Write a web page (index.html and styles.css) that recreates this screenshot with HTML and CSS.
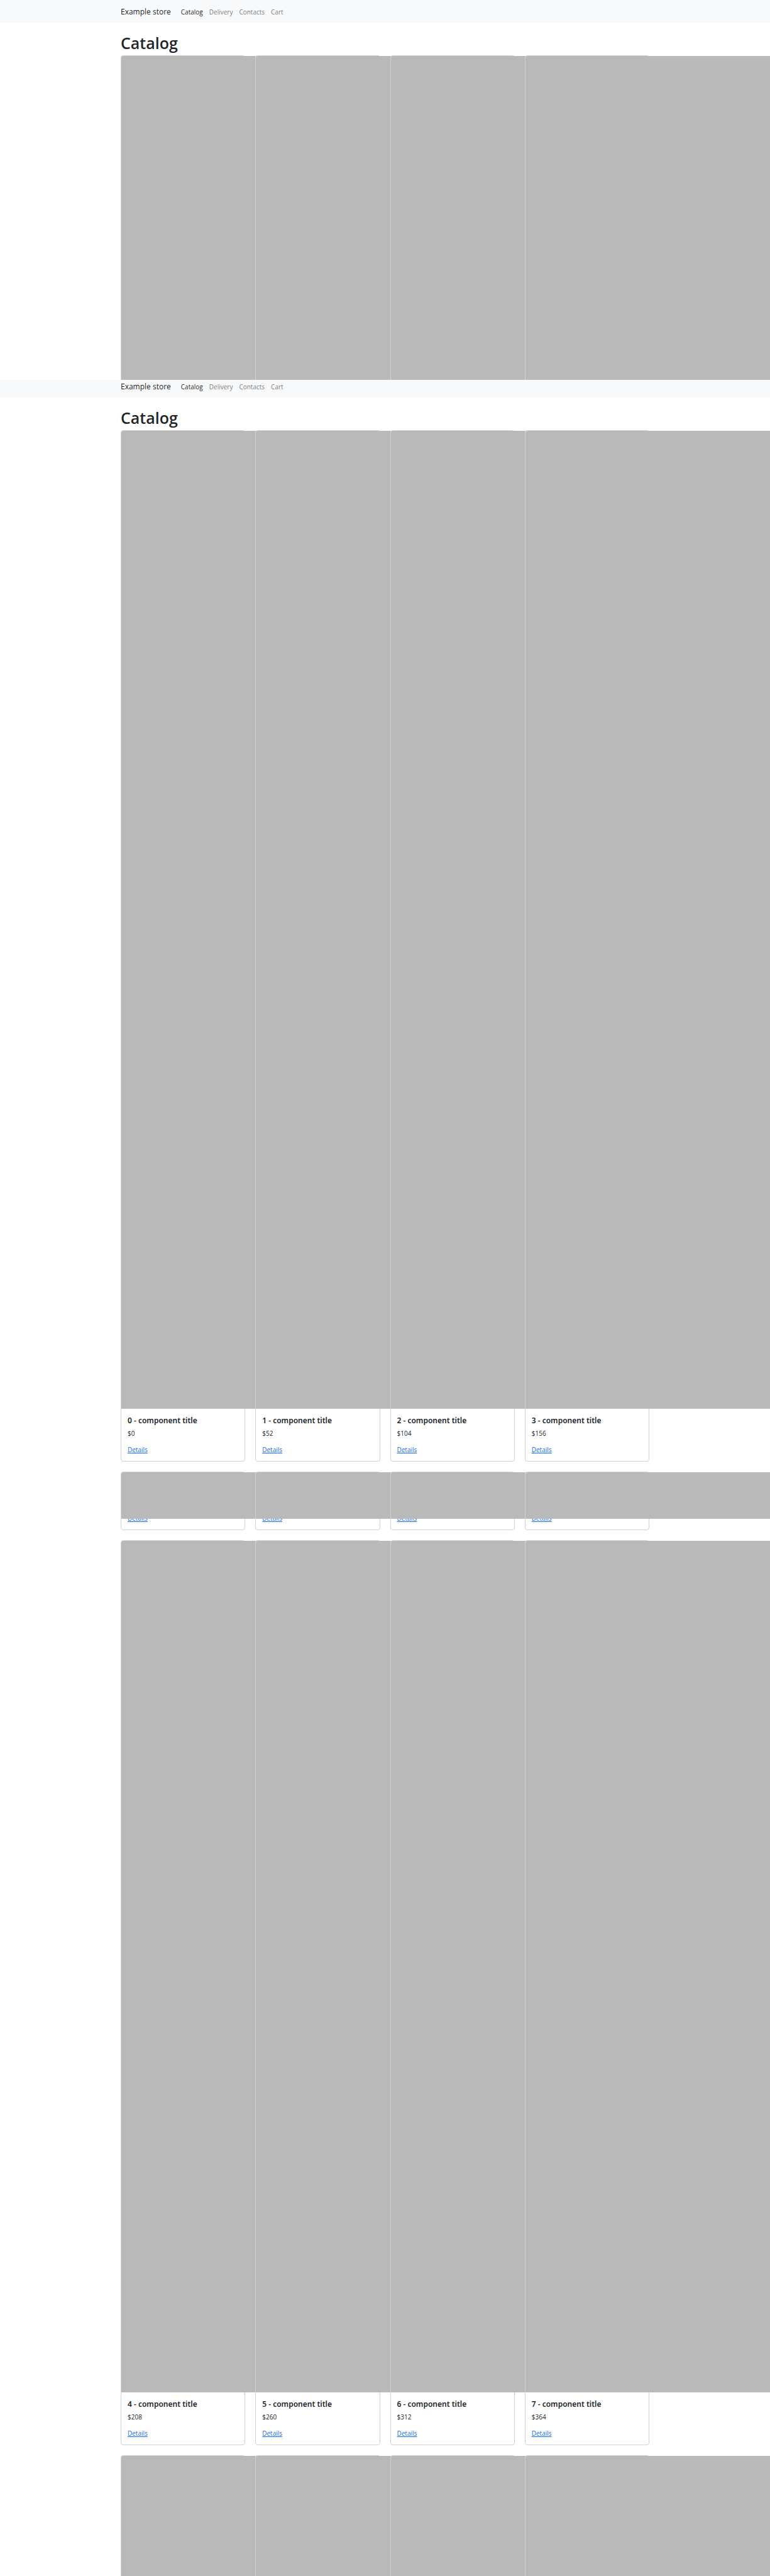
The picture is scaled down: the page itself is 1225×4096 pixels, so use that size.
FILE: index.html
```
<!DOCTYPE html>
<html lang="en">
<head>
<meta charset="utf-8">
<title>Example store - Catalog</title>
<meta name="viewport" content="width=device-width, initial-scale=1">
<link rel="stylesheet" href="styles.css">
</head>
<body>
<div class="page">
<header class="navbar">
  <nav class="container navbar-row">
    <a class="brand" href="#">Example store</a>
    <a class="nav-link active" href="#">Catalog</a>
    <a class="nav-link" href="#">Delivery</a>
    <a class="nav-link" href="#">Contacts</a>
    <a class="nav-link" href="#">Cart</a>
  </nav>
</header>
<section class="container">
  <h1 class="heading">Catalog</h1>
  <div class="grid">
    <article class="card open"><div class="media preview"></div></article>
    <article class="card open"><div class="media preview"></div></article>
    <article class="card open"><div class="media preview"></div></article>
    <article class="card open"><div class="media preview"></div></article>
  </div>
</section>

<header class="navbar compact">
  <nav class="container navbar-row">
    <a class="brand" href="#">Example store</a>
    <a class="nav-link active" href="#">Catalog</a>
    <a class="nav-link" href="#">Delivery</a>
    <a class="nav-link" href="#">Contacts</a>
    <a class="nav-link" href="#">Cart</a>
  </nav>
</header>
<main class="container">
  <h1 class="heading">Catalog</h1>
  <div class="grid">
    <article class="card"><div class="media tall"></div><div class="card-body"><h2 class="title">0 - component title</h2><p class="price">$0</p><a class="details" href="#">Details</a></div></article>
    <article class="card"><div class="media tall"></div><div class="card-body"><h2 class="title">1 - component title</h2><p class="price">$52</p><a class="details" href="#">Details</a></div></article>
    <article class="card"><div class="media tall"></div><div class="card-body"><h2 class="title">2 - component title</h2><p class="price">$104</p><a class="details" href="#">Details</a></div></article>
    <article class="card"><div class="media tall"></div><div class="card-body"><h2 class="title">3 - component title</h2><p class="price">$156</p><a class="details" href="#">Details</a></div></article>

    <article class="card"><div class="media strip"></div><div class="card-body cut"><a class="details" href="#">Details</a></div></article>
    <article class="card"><div class="media strip"></div><div class="card-body cut"><a class="details" href="#">Details</a></div></article>
    <article class="card"><div class="media strip"></div><div class="card-body cut"><a class="details" href="#">Details</a></div></article>
    <article class="card"><div class="media strip"></div><div class="card-body cut"><a class="details" href="#">Details</a></div></article>

    <article class="card"><div class="media medium"></div><div class="card-body"><h2 class="title">4 - component title</h2><p class="price">$208</p><a class="details" href="#">Details</a></div></article>
    <article class="card"><div class="media medium"></div><div class="card-body"><h2 class="title">5 - component title</h2><p class="price">$260</p><a class="details" href="#">Details</a></div></article>
    <article class="card"><div class="media medium"></div><div class="card-body"><h2 class="title">6 - component title</h2><p class="price">$312</p><a class="details" href="#">Details</a></div></article>
    <article class="card"><div class="media medium"></div><div class="card-body"><h2 class="title">7 - component title</h2><p class="price">$364</p><a class="details" href="#">Details</a></div></article>

    <article class="card open"><div class="media short"></div></article>
    <article class="card open"><div class="media short"></div></article>
    <article class="card open"><div class="media short"></div></article>
    <article class="card open"><div class="media short"></div></article>
  </div>
</main>
</div>
</body>
</html>
```
FILE: styles.css
```
* {
  box-sizing: border-box;
}

body {
  margin: 0;
  background: #fff;
  color: #212529;
  font-family: "Open Sans", "Noto Sans", sans-serif;
  font-size: 10px;
  line-height: 16px;
}

.page {
  overflow: hidden;
}

.container {
  max-width: 865px;
  margin: 0 auto;
  padding: 0 12px;
}

.navbar {
  padding: 9px 0 7px;
  background: #f8f9fa;
}

.navbar.compact {
  padding-top: 1px;
}

.navbar-row {
  display: flex;
  align-items: center;
  gap: 10px;
  line-height: 20px;
}

.brand {
  margin-right: 6px;
  color: rgba(0, 0, 0, 0.9);
  font-size: 12px;
  text-decoration: none;
}

.nav-link {
  color: rgba(0, 0, 0, 0.55);
  text-decoration: none;
}

.nav-link.active {
  color: rgba(0, 0, 0, 0.9);
}

.heading {
  margin: 0;
  padding: 16px 0 3px;
  font-size: 25px;
  font-weight: 600;
  line-height: 33px;
}

.grid {
  display: grid;
  grid-template-columns: repeat(4, minmax(0, 1fr));
  gap: 16px;
}

.card {
  border: 1px solid #d2d2d2;
  border-radius: 4px;
  background: #fff;
}

.card.open {
  border-bottom: 0;
  border-bottom-left-radius: 0;
  border-bottom-right-radius: 0;
}

/* Oversized product picture: runs past its card, under the cards to its right */
.media {
  width: 100vw;
  border-top-left-radius: 3px;
  background: #b9b9b9;
}

.media.preview {
  height: 515px;
}

.media.tall {
  height: 1555px;
}

.media.strip {
  height: 74px;
}

.media.medium {
  height: 1354px;
}

.media.short {
  height: 191px;
}

.card-body {
  display: flex;
  flex-direction: column;
  align-items: flex-start;
  padding: 10px;
}

.card-body.cut {
  justify-content: flex-end;
  height: 17px;
  padding-top: 0;
  overflow: hidden;
}

.title {
  margin: 0 0 3px;
  font-family: "Noto Sans", "Open Sans", sans-serif;
  font-size: 12px;
  font-weight: 600;
  line-height: 18px;
}

.price {
  margin: 0 0 10px;
}

.details {
  flex: none;
  color: #0d6efd;
  text-decoration: underline;
}
```
